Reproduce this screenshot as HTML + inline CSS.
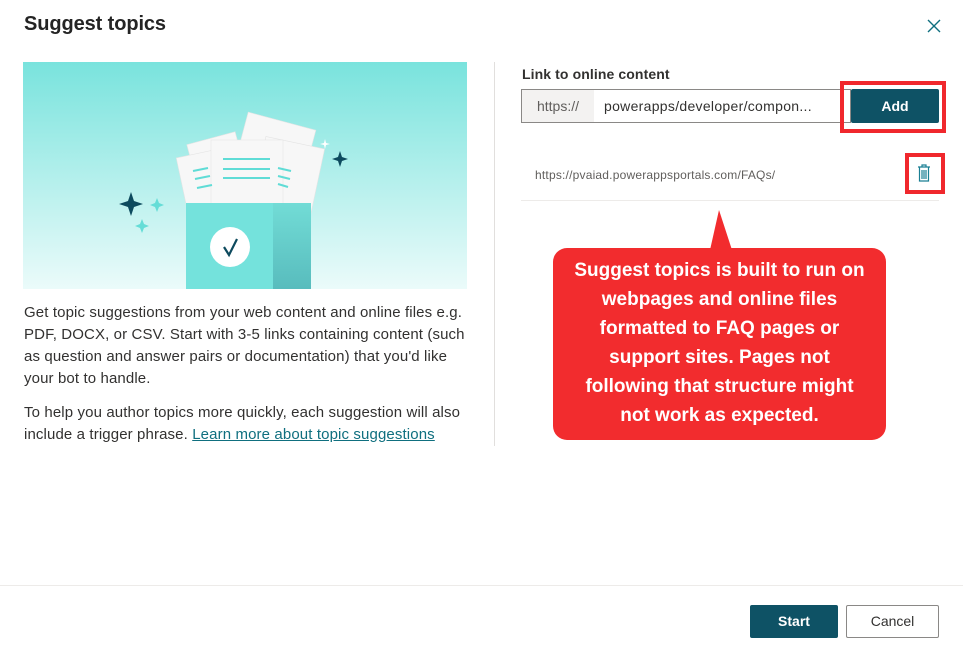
<!DOCTYPE html>
<html><head><style>
body{margin:0;width:963px;height:655px;background:#fff;font-family:"Liberation Sans",sans-serif;position:relative;overflow:hidden;color:#323130}
.a{position:absolute}
p{margin:0;white-space:nowrap}
</style></head><body>
<div class="a" style="left:24px;top:13px;font-size:20px;font-weight:700;color:#242424;letter-spacing:-0.1px">Suggest topics</div>
<svg class="a" style="left:926px;top:18px" width="16" height="16"><path d="M2 2L14 14M14 2L2 14" stroke="#0f6f7f" stroke-width="1.4"/></svg>

<svg class="a" style="left:23px;top:62px" width="444" height="227">
<defs><linearGradient id="g" x1="0" y1="0" x2="0" y2="1"><stop offset="0" stop-color="#79e3dd"/><stop offset="1" stop-color="#ebfbfa"/></linearGradient>
<linearGradient id="s" x1="0" y1="0" x2="0" y2="1"><stop offset="0" stop-color="#72dcd6"/><stop offset="1" stop-color="#58bcbd"/></linearGradient></defs>
<rect width="444" height="227" fill="url(#g)"/>
<g fill="#f7f7f7" stroke="#e4e4e4" stroke-width="0.6">
<rect x="215" y="58" width="70" height="70" transform="rotate(15 250 93)"/>
<rect x="172" y="75" width="50" height="70" transform="rotate(-15 197 110)"/>
<rect x="235" y="80" width="60" height="70" transform="rotate(12 265 115)"/>
<rect x="160" y="90" width="50" height="70" transform="rotate(-12 185 125)"/>
<rect x="188" y="78" width="72" height="70"/>
</g>
<g stroke="#5fdcd6" stroke-width="2"><path d="M200 97H247M200 107H247M200 116H247"/><path d="M170 109L185 106M172 117L187 114M174 126L189 123"/><path d="M255 106L268 109M255 114L267 117M255 122L265 125"/></g>
<rect x="163" y="141" width="87" height="86" fill="#74e2dc"/>
<rect x="250" y="141" width="38" height="86" fill="url(#s)"/>
<circle cx="207" cy="185" r="20" fill="#fff"/>
<path d="M201 185L206 193L214 177" fill="none" stroke="#0d4a5e" stroke-width="2.2"/>
<path d="M108 130L111 139L120 142L111 145L108 154L105 145L96 142L105 139Z" fill="#0d4a5e"/>
<path d="M134 136L136 141L141 143L136 145L134 150L132 145L127 143L132 141Z" fill="#65ddd7"/>
<path d="M119 157L121 162L126 164L121 166L119 171L117 166L112 164L117 162Z" fill="#65ddd7"/>
<path d="M317 89L319 95L325 97L319 99L317 105L315 99L309 97L315 95Z" fill="#0d4a5e"/>
<path d="M302 77L303 81L307 82L303 83L302 87L301 83L297 82L301 81Z" fill="#fff"/>
</svg>

<div class="a" style="left:24px;top:302px;width:450px;font-size:15px;line-height:22px;letter-spacing:0.12px">
<p>Get topic suggestions from your web content and online files e.g.</p>
<p>PDF, DOCX, or CSV. Start with 3-5 links containing content (such</p>
<p>as question and answer pairs or documentation) that you'd like</p>
<p>your bot to handle.</p>
<p style="margin-top:12px">To help you author topics more quickly, each suggestion will also</p>
<p>include a trigger phrase. <span style="color:#0f6f7f;text-decoration:underline">Learn more about topic suggestions</span></p>
</div>
<div class="a" style="left:494px;top:62px;width:1px;height:384px;background:#e1dfdd"></div>

<div class="a" style="left:522px;top:66px;font-size:14px;font-weight:700;letter-spacing:0.1px">Link to online content</div>
<div class="a" style="left:521px;top:89px;width:330px;height:34px;border:1px solid #8a8886;box-sizing:border-box;font-size:14px">
<div class="a" style="left:0;top:0;width:72px;height:32px;background:#f3f2f1;color:#605e5c;line-height:32px;text-align:center">https://</div>
<div class="a" style="left:82px;top:0;line-height:32px;letter-spacing:0.3px">powerapps/developer/compon...</div></div>
<div class="a" style="left:840px;top:81px;width:106px;height:52px;border:4px solid #f0282d;box-sizing:border-box"></div>
<div class="a" style="left:851px;top:89px;width:88px;height:34px;background:#0e5265;border-radius:2px;color:#fff;font-weight:700;font-size:14px;line-height:34px;text-align:center">Add</div>

<div class="a" style="left:535px;top:168px;font-size:12px;color:#605e5c;letter-spacing:0.2px">https://pvaiad.powerappsportals.com/FAQs/</div>
<div class="a" style="left:905px;top:153px;width:40px;height:41px;border:4px solid #f0282d;box-sizing:border-box"></div>
<svg class="a" style="left:916px;top:163px" width="16" height="20"><g fill="none" stroke="#1a7f94" stroke-width="1.2"><path d="M2 4H14M6 4V2H10V4M3.5 4V18H12.5V4M6 7V16M8 7V16M10 7V16"/></g></svg>
<div class="a" style="left:521px;top:200px;width:418px;height:1px;background:#edebe9"></div>

<svg class="a" style="left:553px;top:205px" width="333" height="236"><path d="M166 5L157 45H179Z" fill="#f22c2e"/><rect x="0" y="43" width="333" height="192" rx="14" fill="#f22c2e"/></svg>
<div class="a" style="left:553px;top:256px;width:333px;text-align:center;color:#fff;font-size:19px;font-weight:700;line-height:29px;white-space:nowrap">Suggest topics is built to run on<br>webpages and online files<br>formatted to FAQ pages or<br>support sites. Pages not<br>following that structure might<br>not work as expected.</div>

<div class="a" style="left:0;top:585px;width:963px;height:1px;background:#edebe9"></div>
<div class="a" style="left:750px;top:605px;width:88px;height:33px;background:#0e5265;border-radius:2px;color:#fff;font-weight:700;font-size:14px;line-height:33px;text-align:center">Start</div>
<div class="a" style="left:846px;top:605px;width:93px;height:33px;border:1px solid #8a8886;box-sizing:border-box;border-radius:2px;font-size:14px;line-height:31px;text-align:center">Cancel</div>
</body></html>
